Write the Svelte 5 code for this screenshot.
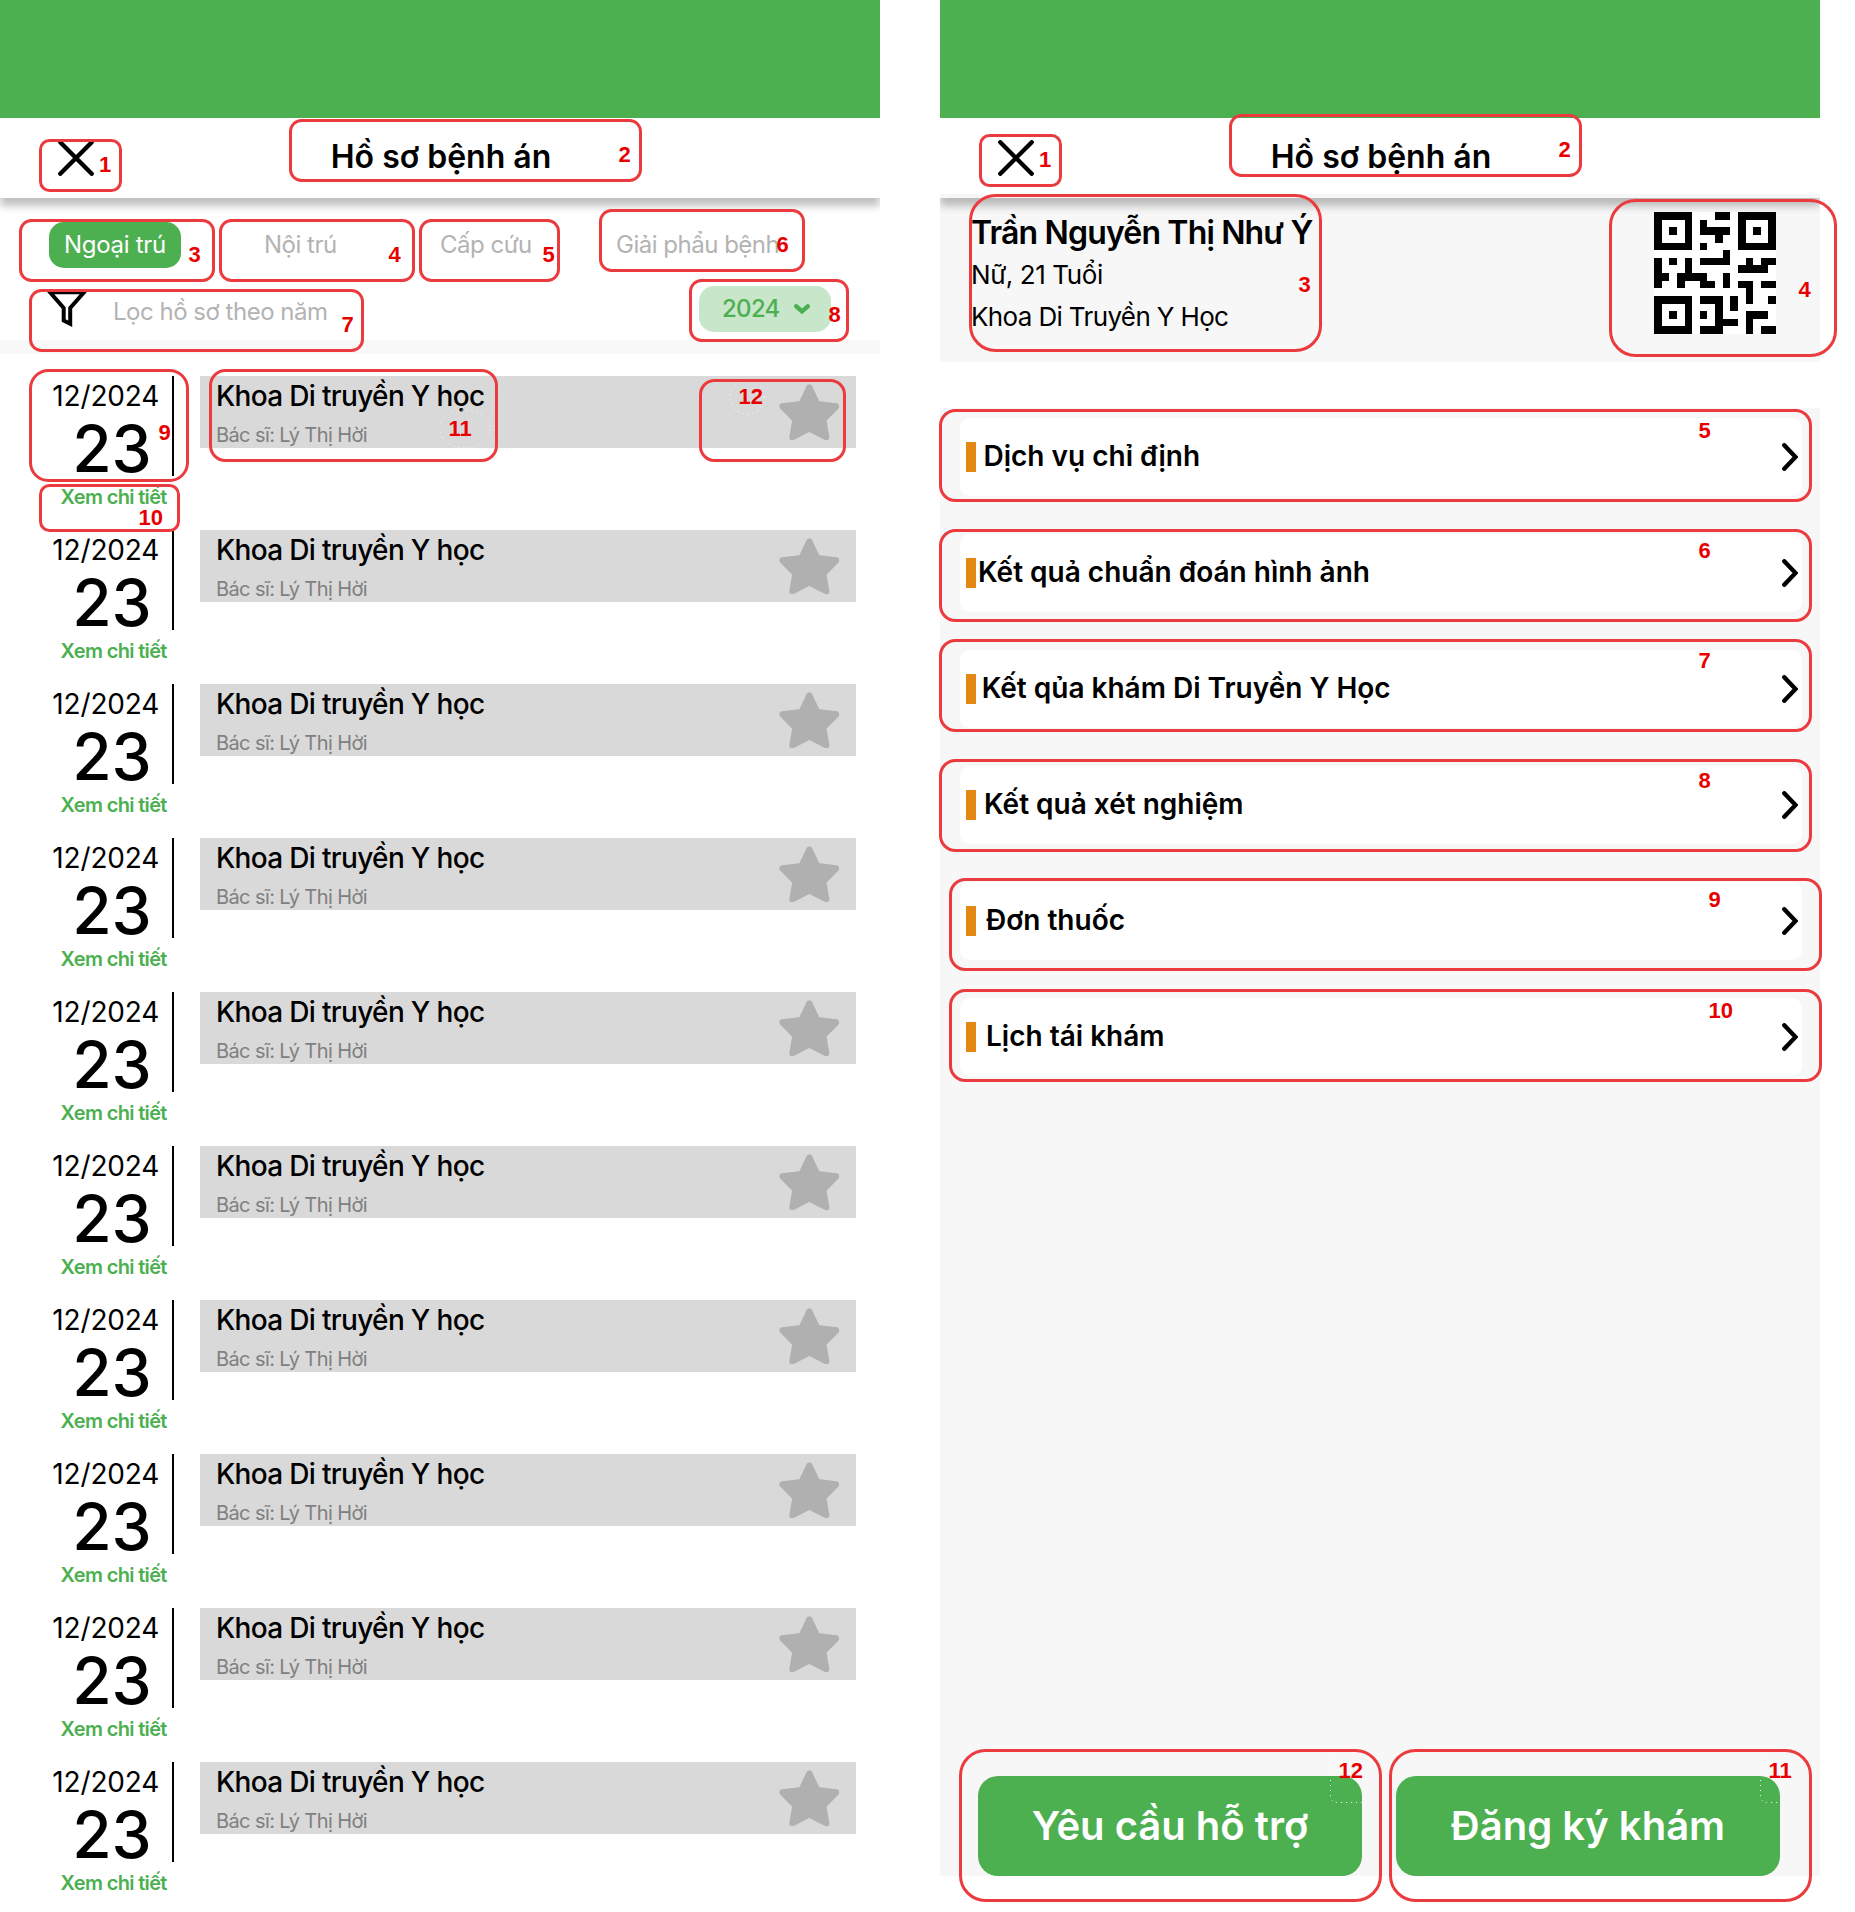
<script>
  const visits = Array.from({ length: 10 }, () => ({
    month: '12/2024',
    day: '23',
    department: 'Khoa Di truyền Y học',
    doctor: 'Bác sĩ: Lý Thị Hời'
  }));

  const services = [
    { label: 'Dịch vụ chỉ định', indent: 7.5 },
    { label: 'Kết quả chuẩn đoán hình ảnh', indent: 2 },
    { label: 'Kết qủa khám Di Truyền Y Học', indent: 5.7 },
    { label: 'Kết quả xét nghiệm', indent: 8 },
    { label: 'Đơn thuốc', indent: 10 },
    { label: 'Lịch tái khám', indent: 10 }
  ];

  const qr = [
    '#####...##.#####',
    '#...#.#....#...#',
    '#.#.#.####.#.#.#',
    '#...#...#..#...#',
    '#####.#....#####',
    '.........#......',
    '#.#.#.####..#.##',
    '#...#......####.',
    '##.####..#......',
    '#..#..##.#.##.##',
    '............#...',
    '#####.###.#.#..#',
    '#...#...#.#.....',
    '#.#.#.#.#...###.',
    '#...#...###.#...',
    '#####.###...#.##'
  ];
  const qrPath = qr
    .flatMap((row, y) => [...row].map((c, x) => (c === '#' ? `M${x} ${y}h1v1h-1z` : '')))
    .join('');

  // Callout frames: x, y, width, height, corner radius, number, number x, number baseline
  const notes = [
    [39, 139, 83, 53, 9, 1, 99, 172],
    [289, 119, 353, 63, 11, 2, 618.5, 162],
    [19, 219, 196, 63, 11, 3, 188.5, 262],
    [219, 219, 196, 63, 11, 4, 388.5, 262],
    [419, 219, 141, 63, 11, 5, 542.5, 262],
    [599, 209, 206, 63, 11, 6, 776.5, 252],
    [29, 289, 335, 63, 11, 7, 341.5, 332],
    [689, 279, 160, 63, 11, 8, 828.5, 322],
    [29, 369, 160, 113, 18, 9, 158.5, 440],
    [39, 484, 141, 48, 9, 10, 138.5, 525],
    [209, 369, 289, 93, 15, 11, 448.5, 436],
    [699, 379, 147, 83, 14, 12, 738.5, 404],
    [979, 134, 83, 53, 9, 1, 1039, 167],
    [1229, 114, 353, 63, 11, 2, 1558.5, 157],
    [969, 194, 353, 158, 25, 3, 1298.5, 292],
    [1609, 199, 228, 158, 25, 4, 1798.5, 297],
    [939, 409, 873, 93, 15, 5, 1698.5, 438],
    [939, 529, 873, 93, 15, 6, 1698.5, 558],
    [939, 639, 873, 93, 15, 7, 1698.5, 668],
    [939, 759, 873, 93, 15, 8, 1698.5, 788],
    [949, 878, 873, 93, 15, 9, 1708.5, 907],
    [949, 989, 873, 93, 15, 10, 1708.5, 1018],
    [1389, 1749, 423, 153, 25, 11, 1768.5, 1778],
    [959, 1749, 423, 153, 25, 12, 1338.5, 1778]
  ].map(([x, y, w, h, r, n, tx, ty]) => ({ x, y, w, h, r, n, tx, ty }));
</script>

{#snippet appHeader()}
  <div class="status"></div>
  <header>
    <svg class="close" viewBox="0 0 36 36"><path d="M2.3 2.3L33.7 33.7M33.7 2.3L2.3 33.7" /></svg>
    <h1>Hồ sơ bệnh án</h1>
  </header>
{/snippet}

<div class="board">
  <section class="screen records">
    {@render appHeader()}
    <nav class="tabs">
      <span class="tab active">Ngoại trú</span>
      <span class="tab">Nội trú</span>
      <span class="tab">Cấp cứu</span>
      <span class="tab">Giải phẩu bệnh</span>
    </nav>
    <div class="filter">
      <svg class="funnel" viewBox="0 0 44 44"><path d="M6 6.3H40L26.2 22V37.8L19.7 34.6V22Z" /></svg>
      <span class="hint">Lọc hồ sơ theo năm</span>
      <span class="year">
        2024
        <svg viewBox="0 0 16 10"><path d="M2.3 2.3L8 7.3L13.7 2.3" /></svg>
      </span>
    </div>
    <div class="strip"></div>
    <div class="list">
      {#each visits as v}
        <article>
          <div class="date">
            <span class="month">{v.month}</span>
            <span class="day">{v.day}</span>
            <span class="more">Xem chi tiết</span>
          </div>
          <div class="rule"></div>
          <div class="card">
            <div>
              <h2>{v.department}</h2>
              <p>{v.doctor}</p>
            </div>
            <svg class="star" viewBox="536 101 182 170">
              <path d="M627 111L603 161L546 168L585 208L576 261L627 235L678 261L669 208L708 168L651 161Z" />
            </svg>
          </div>
        </article>
      {/each}
    </div>
  </section>

  <section class="screen detail">
    {@render appHeader()}
    <div class="profile">
      <div>
        <h2>Trần Nguyễn Thị Như Ý</h2>
        <p class="age">Nữ, 21 Tuổi</p>
        <p class="dept">Khoa Di Truyền Y Học</p>
      </div>
      <svg class="qr" viewBox="0 0 16 16" shape-rendering="crispEdges"><path d={qrPath} /></svg>
    </div>
    <div class="menu">
      {#each services as s}
        <div class="item">
          <i></i>
          <span style:padding-left="{s.indent}px">{s.label}</span>
          <svg viewBox="0 0 16 28"><path d="M2.3 2.3L13.5 14L2.3 25.7" /></svg>
        </div>
      {/each}
      <div class="actions">
        <button>Yêu cầu hỗ trợ</button>
        <button>Đăng ký khám</button>
      </div>
    </div>
  </section>

  <svg class="notes" viewBox="0 0 1855 1912">
    <g class="dots">
      <ellipse cx="465" cy="429" rx="25" ry="19" />
      <circle cx="747" cy="397" r="17" />
      <path d="M1330.5 1750V1795Q1330.5 1802.5 1338 1802.5H1362" />
      <path d="M1760.5 1750V1795Q1760.5 1802.5 1768 1802.5H1780" />
    </g>
    {#each notes as n}
      <rect x={n.x + 1.5} y={n.y + 1.5} width={n.w - 3} height={n.h - 3} rx={n.r} />
      <text x={n.tx} y={n.ty}>{n.n}</text>
    {/each}
  </svg>
</div>

<style>
  :global(body) {
    background: #fff;
  }
  .board {
    position: relative;
    display: flex;
    gap: 60px;
    width: 1855px;
    height: 1912px;
    overflow: hidden;
    font-family: Inter, 'Liberation Sans', sans-serif;
    color: #000;
    white-space: nowrap;
  }
  .screen {
    display: flex;
    flex-direction: column;
    width: 880px;
    flex: none;
    overflow: hidden;
  }
  h1,
  h2,
  p {
    margin: 0;
  }
  svg {
    flex: none;
    fill: none;
    stroke: #000;
    stroke-linecap: round;
  }
  .status {
    height: 118px;
    flex: none;
    background: #4caf50;
  }
  header {
    position: relative;
    z-index: 1;
    display: grid;
    grid-template-columns: 1fr auto 1fr;
    box-sizing: border-box;
    height: 80px;
    flex: none;
    background: #fff;
    box-shadow: 0 8px 8px rgba(0, 0, 0, 0.25);
  }
  .detail header {
    border-bottom: 4px solid #f7f7f7;
  }
  .close {
    width: 36px;
    height: 36px;
    margin: 22px 0 0 58px;
    stroke-width: 4.4;
  }
  h1 {
    padding: 1px 0 0 2px;
    font-size: 32px;
    font-weight: 600;
    line-height: 76px;
  }
  .detail h1 {
    height: 75px;
  }
  .tabs {
    display: grid;
    grid-template-columns: 215px 176px 176px auto;
    margin: 24px 0 18px 49px;
    font-size: 24px;
    line-height: 46px;
    letter-spacing: -0.49px;
    color: #b3b3b3;
  }
  .tab.active {
    width: 132px;
    border-radius: 15px;
    background: #4caf50;
    color: #fff;
    letter-spacing: -0.3px;
    text-align: center;
  }
  .filter {
    display: flex;
    height: 46px;
    padding: 0 49px 8px 44px;
    font-size: 24px;
  }
  .funnel {
    width: 44px;
    height: 44px;
    margin-right: 25px;
    stroke-width: 4;
    stroke-linecap: butt;
  }
  .hint {
    flex: 1;
    line-height: 51px;
    letter-spacing: -0.49px;
    color: #b3b3b3;
  }
  .year {
    display: flex;
    align-items: center;
    justify-content: space-between;
    box-sizing: border-box;
    width: 132px;
    padding: 0 21px 0 23px;
    border-radius: 15px;
    background: #c8e6c9;
    color: #4caf50;
    font-weight: 450;
    line-height: 46px;
    letter-spacing: -0.7px;
  }
  .year svg {
    width: 16px;
    height: 10px;
    stroke: #4caf50;
    stroke-width: 4.4;
  }
  .strip {
    height: 14px;
    flex: none;
    background: #f8f8f8;
  }
  .list {
    display: grid;
    grid-auto-rows: 154px;
    padding-top: 22px;
  }
  article {
    display: flex;
    align-items: flex-start;
  }
  .date {
    display: flex;
    flex-direction: column;
    width: 172px;
  }
  .month {
    padding-left: 52.3px;
    font-size: 28px;
    line-height: 40px;
    letter-spacing: -0.15px;
  }
  .day {
    padding-left: 72.2px;
    font-size: 64px;
    font-weight: 500;
    line-height: 66px;
    letter-spacing: -0.2px;
  }
  .more {
    padding-left: 60.6px;
    font-size: 20px;
    font-weight: 600;
    line-height: 31px;
    letter-spacing: -0.66px;
    color: #4caf50;
  }
  .rule {
    width: 2px;
    height: 100px;
    margin-right: 26px;
    background: #000;
  }
  .card {
    display: flex;
    justify-content: space-between;
    box-sizing: border-box;
    width: 656px;
    height: 72px;
    padding: 0 16.8px 0 16px;
    background: #d9d9d9;
  }
  .card h2 {
    font-size: 28px;
    font-weight: 500;
    line-height: 40px;
    letter-spacing: -0.67px;
  }
  .card p {
    margin-top: 8px;
    font-size: 20px;
    font-weight: 400;
    line-height: 23px;
    letter-spacing: -0.6px;
    color: #808080;
  }
  .star {
    width: 60.7px;
    height: 56.7px;
    margin-top: 7.7px;
    fill: #b0b0b0;
    stroke: #b0b0b0;
    stroke-width: 18;
    stroke-linejoin: round;
  }
  .profile {
    display: flex;
    justify-content: space-between;
    box-sizing: border-box;
    height: 164px;
    flex: none;
    padding: 10px 44px 0 31px;
    background: #f7f7f7;
  }
  .profile h2 {
    padding-top: 1px;
    font-size: 32px;
    font-weight: 600;
    line-height: 48px;
    letter-spacing: -0.84px;
  }
  .profile p {
    font-size: 26px;
    line-height: 36px;
  }
  .profile .age {
    font-weight: 400;
    letter-spacing: -0.42px;
  }
  .profile .dept {
    margin-top: 6px;
    letter-spacing: -0.64px;
  }
  .qr {
    width: 122px;
    height: 122px;
    margin-top: 4px;
    background: #fff;
    fill: #000;
    stroke: none;
  }
  .menu {
    display: flex;
    flex-direction: column;
    gap: 38px;
    box-sizing: border-box;
    height: 1468px;
    flex: none;
    margin-top: 46px;
    padding: 10px 18px 0 20px;
    background: #f7f7f7;
  }
  .item {
    display: flex;
    align-items: center;
    box-sizing: border-box;
    height: 78px;
    padding: 0 4px 0 6px;
    border-radius: 10px;
    background: #fff;
    font-size: 28px;
    font-weight: 600;
  }
  .item i {
    width: 10px;
    height: 30px;
    background: #e58813;
  }
  .item span {
    flex: 1;
    line-height: 76px;
    margin-bottom: 2px;
  }
  .item svg {
    width: 16px;
    height: 28px;
    stroke-width: 4.4;
  }
  .actions {
    display: flex;
    gap: 34px;
    margin-top: auto;
    padding-left: 18px;
  }
  button {
    width: 384px;
    height: 100px;
    padding: 0;
    border: 0;
    border-radius: 20px;
    background: #4caf50;
    color: #fff;
    font: 600 40px/100px Inter, 'Liberation Sans', sans-serif;
  }
  .notes {
    position: absolute;
    z-index: 2;
    left: 0;
    top: 0;
    width: 1855px;
    height: 1912px;
  }
  .notes rect {
    stroke: #eb3b3e;
    stroke-width: 3;
  }
  .notes text {
    fill: #e80000;
    stroke: none;
    font: bold 22px 'Liberation Sans', Arial, sans-serif;
  }
  .dots {
    stroke: #fff;
    stroke-width: 1;
    stroke-dasharray: 1 4;
    stroke-linecap: butt;
  }
</style>
